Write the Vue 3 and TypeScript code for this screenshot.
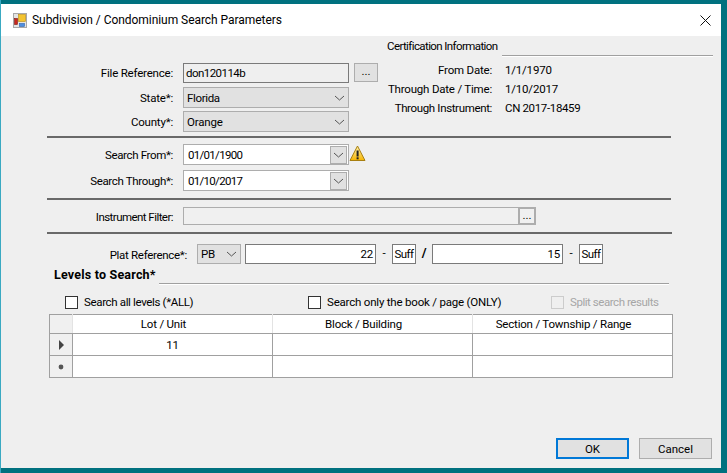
<script setup lang="ts">
const certRows = [
  { label: 'From Date:', value: '1/1/1970', tight: false },
  { label: 'Through Date / Time:', value: '1/10/2017', tight: false },
  { label: 'Through Instrument:', value: 'CN 2017-18459', tight: true },
]
const searchRows = [
  { label: 'Search From*:', value: '01/01/1900', warn: true },
  { label: 'Search Through*:', value: '01/10/2017', warn: false },
]
const columns = ['Lot / Unit', 'Block / Building', 'Section / Township / Range']
</script>

<template>
  <div class="screen">
    <div class="dialog">
      <header class="titlebar">
        <svg class="app-icon" width="14" height="15" viewBox="0 0 14 15">
          <rect x="0.5" y="0.5" width="13" height="14" fill="#e4e4e4" stroke="#a8a8a8" />
          <rect x="1.5" y="5.5" width="3" height="6" fill="#c8281e" stroke="#7d1a14" stroke-width="0.6" />
          <rect x="5.5" y="1.5" width="7" height="7" fill="#f4c430" stroke="#b98a10" stroke-width="0.6" />
          <rect x="6.5" y="10.5" width="5" height="3" fill="#4f8fe0" stroke="#2c62ad" stroke-width="0.6" />
        </svg>
        <span class="title">Subdivision / Condominium Search Parameters</span>
        <svg class="close" width="11" height="11" viewBox="0 0 11 11">
          <path d="M0.5 0.5 L10.5 10.5 M10.5 0.5 L0.5 10.5" stroke="#111" stroke-width="1" fill="none" />
        </svg>
      </header>

      <main class="body">
        <section class="top">
          <div class="top-left">
            <div class="form-row first">
              <label class="lbl">File Reference:</label>
              <div class="field readonly">don120114b</div>
              <button class="dots browse">...</button>
            </div>
            <div class="form-row">
              <label class="lbl">State*:</label>
              <div class="combo">
                <span class="tight">Florida</span>
                <svg width="11" height="6" viewBox="0 0 11 6"><path d="M1 1 L5.5 5 L10 1" fill="none" stroke="#555" /></svg>
              </div>
            </div>
            <div class="form-row">
              <label class="lbl">County*:</label>
              <div class="combo">
                <span>Orange</span>
                <svg width="11" height="6" viewBox="0 0 11 6"><path d="M1 1 L5.5 5 L10 1" fill="none" stroke="#555" /></svg>
              </div>
            </div>
          </div>
          <div class="cert">
            <div class="cert-head">
              <span class="cert-title">Certification Information</span>
              <i class="groove"></i>
            </div>
            <dl class="cert-grid">
              <template v-for="r in certRows" :key="r.label">
                <dt :class="{ tight: r.tight }">{{ r.label }}</dt>
                <dd :class="{ tight: r.tight }">{{ r.value }}</dd>
              </template>
            </dl>
          </div>
        </section>
        <div class="rule"></div>

        <section class="dates">
          <div v-for="r in searchRows" :key="r.label" class="form-row date-row">
            <label class="lbl tight">{{ r.label }}</label>
            <div class="date">
              <span class="date-val">{{ r.value }}</span>
              <span class="date-btn">
                <svg width="11" height="6" viewBox="0 0 11 6"><path d="M1 1 L5.5 5 L10 1" fill="none" stroke="#555" /></svg>
              </span>
            </div>
            <svg v-if="r.warn" class="warn" width="17" height="17" viewBox="0 0 17 17">
              <defs>
                <linearGradient id="wg" x1="0" y1="0" x2="0" y2="1">
                  <stop offset="0" stop-color="#fff3b0" />
                  <stop offset="1" stop-color="#f7b500" />
                </linearGradient>
              </defs>
              <path d="M8.5 1 L16 15.5 H1 Z" fill="url(#wg)" stroke="#a87f10" stroke-linejoin="round" />
              <rect x="7.6" y="5.5" width="2" height="6" fill="#222" />
              <rect x="7.6" y="12.3" width="2" height="2" fill="#222" />
            </svg>
          </div>
        </section>
        <div class="rule"></div>

        <section class="filter">
          <div class="form-row">
            <label class="lbl">Instrument Filter:</label>
            <div class="filter-box">
              <button class="dots filter-btn">...</button>
            </div>
          </div>
        </section>
        <div class="rule long"></div>

        <section class="plat">
          <label class="plat-lbl">Plat Reference*:</label>
          <div class="pb">
            <span>PB</span>
            <svg width="11" height="6" viewBox="0 0 11 6"><path d="M1 1 L5.5 5 L10 1" fill="none" stroke="#555" /></svg>
          </div>
          <div class="num">22</div>
          <span class="dash">-</span>
          <div class="suff">Suff</div>
          <span class="slash">/</span>
          <div class="num">15</div>
          <span class="dash">-</span>
          <div class="suff">Suff</div>
        </section>

        <div class="levels-head">
          <b>Levels to Search*</b>
          <i class="groove"></i>
        </div>

        <div class="checks">
          <div class="check c1"><i class="box"></i><span class="tight">Search all levels (*ALL)</span></div>
          <div class="check c2"><i class="box"></i>Search only the book / page (ONLY)</div>
          <div class="check c3 disabled"><i class="box"></i><span class="tighter">Split search results</span></div>
        </div>

        <table class="levels">
          <thead>
            <tr>
              <th class="row-head"></th>
              <th v-for="c in columns" :key="c">{{ c }}</th>
            </tr>
          </thead>
          <tbody>
            <tr>
              <td class="row-head">
                <svg width="7" height="10" viewBox="0 0 7 10"><path d="M1 0 L6 5 L1 10 Z" fill="#444" /></svg>
              </td>
              <td>11</td>
              <td></td>
              <td></td>
            </tr>
            <tr>
              <td class="row-head">
                <svg width="6" height="6" viewBox="0 0 6 6"><circle cx="3" cy="3" r="2.4" fill="#555" /></svg>
              </td>
              <td></td>
              <td></td>
              <td></td>
            </tr>
          </tbody>
        </table>

        <footer class="actions">
          <button class="btn default">OK</button>
          <button class="btn">Cancel</button>
        </footer>
      </main>
    </div>
  </div>
</template>

<style>
html, body {
  margin: 0;
  overflow: hidden;
}
</style>

<style scoped>
* {
  box-sizing: border-box;
}
.screen {
  width: 727px;
  height: 473px;
  padding: 4px 6px 5px 1px;
  background: #00717f;
  box-shadow: inset 1px 0 0 #3aa9c2;
  font-family: Roboto, "Liberation Sans", sans-serif;
  font-size: 11.5px;
  letter-spacing: -0.2px;
  color: #000;
}
.dialog {
  height: 100%;
  display: flex;
  flex-direction: column;
  background: #efefef;
}
.titlebar {
  height: 32px;
  flex: none;
  display: flex;
  align-items: center;
  padding: 0 10px 0 12px;
  background: #fff;
}
.app-icon {
  margin-right: 5px;
}
.title {
  font-size: 12px;
  letter-spacing: -0.05px;
  flex: 1;
}
.body {
  flex: 1;
  position: relative;
}
.top {
  height: 100px;
  display: flex;
  padding-left: 46px;
}
.top-left {
  width: 331px;
  padding-top: 27px;
}
.form-row {
  display: flex;
  align-items: center;
  margin-bottom: 3px;
}
.form-row.first {
  margin-bottom: 4px;
}
.lbl {
  width: 126px;
  margin-right: 10px;
  text-align: right;
  flex: none;
}
.field {
  width: 166px;
  height: 20px;
  line-height: 18px;
  padding-left: 2px;
  letter-spacing: -0.55px;
  border: 1px solid #7a7a7a;
  background: #efefef;
}
.dots {
  padding: 0;
  border: 1px solid #adadad;
  background: #e1e1e1;
  font: inherit;
  color: #000;
  line-height: 1;
}
.browse {
  width: 24px;
  height: 19px;
  margin-left: 5px;
  margin-top: -2px;
}
.combo {
  width: 166px;
  height: 21px;
  display: flex;
  align-items: center;
  justify-content: space-between;
  padding: 0 3px 0 3px;
  border: 1px solid #adadad;
  background: #e1e1e1;
}
.cert {
  width: 326px;
  margin-left: 9px;
  padding-top: 2px;
}
.cert-head {
  display: flex;
  gap: 5px;
  height: 19px;
  line-height: 16px;
}
.cert-title {
  letter-spacing: -0.6px;
}
.groove {
  display: block;
  flex: 1;
  height: 2px;
  align-self: flex-end;
  background: #a0a0a0;
  border-bottom: 1px solid #fff;
}
.cert-grid {
  display: grid;
  grid-template-columns: 105px 1fr;
  grid-auto-rows: 19px;
  column-gap: 13px;
  margin: 4px 0 0;
  line-height: 19px;
}
.cert-grid dt {
  text-align: right;
  white-space: nowrap;
}
.cert-grid dd {
  margin: 0;
}
.tight {
  letter-spacing: -0.35px;
}
.tighter {
  letter-spacing: -0.45px;
}
.rule {
  width: 624px;
  height: 2px;
  margin-left: 46px;
  background: #696969;
  flex: none;
}
.rule.long {
  width: 625px;
}
.dates {
  height: 60px;
  padding: 6px 46px 0;
}
.date-row {
  margin-bottom: 5px;
}
.date {
  width: 166px;
  height: 21px;
  display: flex;
  align-items: center;
  justify-content: space-between;
  padding: 0 1px 0 4px;
  border: 1px solid #adadad;
  background: #fff;
}
.date-val {
  letter-spacing: -0.7px;
}
.date-btn {
  width: 17px;
  height: 18px;
  display: flex;
  align-items: center;
  justify-content: center;
  border: 1px solid #adadad;
  background: #e1e1e1;
}
.warn {
  margin-top: -3px;
}
.filter {
  height: 32px;
  padding: 7px 46px 0;
}
.filter .lbl {
  padding-top: 2px;
  letter-spacing: -0.55px;
}
.filter-box {
  width: 353px;
  height: 18px;
  display: flex;
  justify-content: flex-end;
  border: 1px solid #adadad;
  background: #f0f0f0;
}
.filter-btn {
  width: 18px;
  height: 18px;
  margin: -1px;
  border: 2px solid #adadad;
  background: #f0f0f0;
}
.plat {
  padding: 10px 0 0 46px;
  display: flex;
  align-items: flex-start;
  height: 33px;
}
.plat-lbl {
  width: 140px;
  margin-right: 10px;
  padding-top: 4px;
  text-align: right;
  letter-spacing: -0.3px;
}
.pb {
  width: 44px;
  height: 20px;
  display: flex;
  align-items: center;
  justify-content: space-between;
  padding: 0 3px 0 3px;
  border: 1px solid #adadad;
  background: #e1e1e1;
  margin-right: 4px;
}
.num {
  width: 131px;
  height: 20px;
  padding-right: 2px;
  line-height: 18px;
  text-align: right;
  border: 1px solid #7a7a7a;
  background: #fff;
}
.dash {
  width: 16px;
  text-align: center;
  line-height: 18px;
}
.suff {
  width: 24px;
  height: 20px;
  line-height: 18px;
  text-align: center;
  letter-spacing: -0.5px;
  border: 1px solid #7a7a7a;
  background: #fff;
}
.slash {
  width: 16px;
  text-align: center;
  font-size: 13px;
  font-weight: 700;
  line-height: 18px;
}
.levels-head {
  display: flex;
  width: 615px;
  height: 18px;
  margin: 0 0 0 53px;
  gap: 3px;
  line-height: 16px;
}
.levels-head b {
  font-size: 12.5px;
  letter-spacing: 0.2px;
}
.checks {
  position: relative;
  height: 29px;
  display: flex;
}
.check {
  display: flex;
  align-items: flex-start;
  margin-top: 10px;
  line-height: 15px;
  flex: none;
}
.c1 {
  margin-left: 64px;
  width: 243px;
}
.c2 {
  width: 243px;
}
.box {
  display: block;
  width: 13px;
  height: 13px;
  margin: 1px 6px 0 0;
  border: 1px solid #333;
  background: #fff;
}
.disabled {
  color: #a6a6a6;
}
.disabled .box {
  border-color: #ccc;
  background: transparent;
}
.levels {
  width: 624px;
  margin-left: 48px;
  table-layout: fixed;
  border-collapse: collapse;
  background: #fff;
}
.levels th,
.levels td {
  padding: 0;
  text-align: center;
  font-weight: 400;
  border: 1px solid #a0a0a0;
}
.levels th {
  height: 19px;
  padding-right: 18px;
  border-left-color: #e3e3e3;
  border-right-color: #e3e3e3;
}
.levels td {
  height: 22px;
}
.levels th:first-child,
.levels th:last-child {
  border-left-color: #a0a0a0;
}
.levels th:last-child {
  border-right-color: #a0a0a0;
}
.levels .row-head {
  width: 23px;
  padding-right: 0;
  background: #f0f0f0;
  line-height: 0;
}
.actions {
  position: absolute;
  right: 9px;
  bottom: 9px;
  display: flex;
  gap: 10px;
}
.btn {
  width: 73px;
  height: 21px;
  padding: 0;
  border: 1px solid #adadad;
  background: #e1e1e1;
  font: inherit;
  color: #000;
}
.btn.default {
  border: 2px solid #0078d7;
}
</style>
